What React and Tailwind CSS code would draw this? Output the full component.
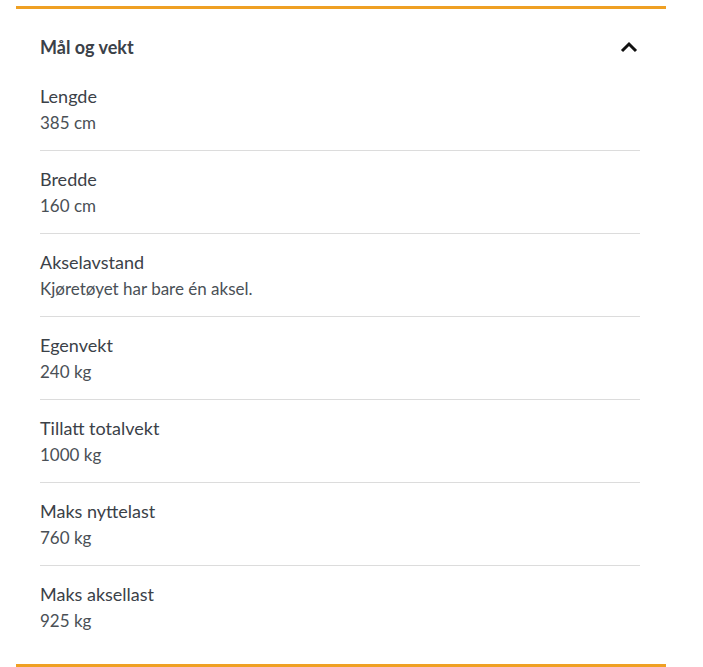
const rows = [
  { label: "Lengde", value: "385 cm" },
  { label: "Bredde", value: "160 cm" },
  { label: "Akselavstand", value: "Kjøretøyet har bare én aksel." },
  { label: "Egenvekt", value: "240 kg" },
  { label: "Tillatt totalvekt", value: "1000 kg" },
  { label: "Maks nyttelast", value: "760 kg" },
  { label: "Maks aksellast", value: "925 kg" },
];

export default function App() {
  return (
    <div className="min-h-screen bg-white pt-[6px] font-['Lato','Open_Sans',sans-serif] text-[#3b4148]">
      <section className="ml-4 w-[650px] border-y-[3px] border-[#efa023] pl-6 pr-[26px]">
        <div className="flex items-center justify-between pt-[26px] pb-[9px]">
          <h2 className="text-[18px] font-bold leading-6">Mål og vekt</h2>
          <svg width="18" height="12" viewBox="0 0 18 12" className="mr-[2px] mt-[-1px]">
            <path d="M2 10 L9 3 L16 10" fill="none" stroke="#111" strokeWidth="3" />
          </svg>
        </div>

        {rows.map((r, i) => (
          <div
            key={r.label}
            className={
              i < rows.length - 1
                ? "border-b border-[#dcdcdc] pt-[15px] pb-[14px]"
                : "pt-[15px] pb-[30px]"
            }
          >
            <div className="text-[18px] leading-[26px]">{r.label}</div>
            <div className="mt-px text-[17px] leading-[26px] text-[#4a5056]">{r.value}</div>
          </div>
        ))}
      </section>
    </div>
  );
}
